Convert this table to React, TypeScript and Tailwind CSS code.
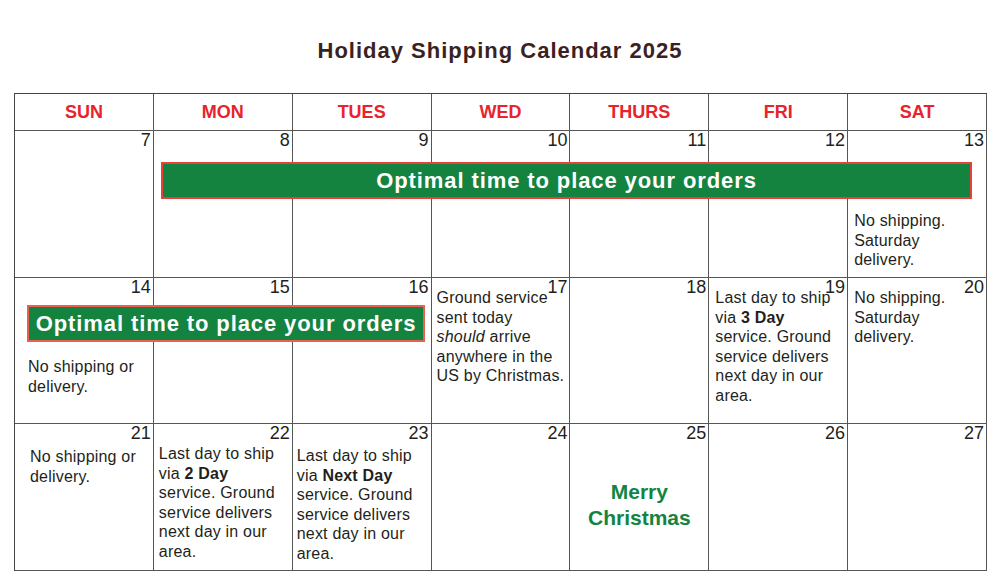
import React from "react";

function Num({ n }: { n: number }) {
  return (
    <div className="h-[18px] text-right pr-[2px] text-[18px] leading-[18px]">{n}</div>
  );
}

function Cell({
  n,
  h,
  children,
}: {
  n: number;
  h: string;
  children?: React.ReactNode;
}) {
  return (
    <div className={`border-r border-b border-[#555] flex flex-col ${h}`}>
      <Num n={n} />
      {children}
    </div>
  );
}

function Txt({ className, children }: { className: string; children: React.ReactNode }) {
  return (
    <div className={`text-[16px] leading-[19.5px] tracking-[0.2px] ${className}`}>{children}</div>
  );
}

export default function App() {
  const days = ["SUN", "MON", "TUES", "WED", "THURS", "FRI", "SAT"];
  return (
    <div className="w-[1000px] h-[582px] bg-white font-['Liberation_Sans',Arial,sans-serif] text-[#231f20] overflow-hidden">
      <div className="pt-[40px] text-center text-[22px] leading-[22px] font-bold tracking-[1px] text-[#3b2222]">
        Holiday Shipping Calendar 2025
      </div>
      <div className="relative ml-[14px] mt-[31px] w-[973px] grid grid-cols-7 border-l border-t border-[#444]">
        {days.map((d) => (
          <div
            key={d}
            className="h-[37px] border-r border-b border-[#555] flex items-center justify-center text-[18px] font-bold text-[#e8232c]"
          >
            {d}
          </div>
        ))}

        {/* Row 1 */}
        <Cell n={7} h="h-[147px]" />
        <Cell n={8} h="h-[147px]" />
        <Cell n={9} h="h-[147px]" />
        <Cell n={10} h="h-[147px]" />
        <Cell n={11} h="h-[147px]" />
        <Cell n={12} h="h-[147px]" />
        <Cell n={13} h="h-[147px]">
          <Txt className="mt-[62px] pl-[6px]">
            No shipping.
            <br />
            Saturday
            <br />
            delivery.
          </Txt>
        </Cell>

        {/* Row 2 */}
        <Cell n={14} h="h-[146px]">
          <Txt className="mt-[61px] pl-[13px]">
            No shipping or
            <br />
            delivery.
          </Txt>
        </Cell>
        <Cell n={15} h="h-[146px]" />
        <Cell n={16} h="h-[146px]" />
        <Cell n={17} h="h-[146px]">
          <Txt className="mt-[-8px] pl-[5px]">
            Ground service
            <br />
            sent today
            <br />
            <i>should</i> arrive
            <br />
            anywhere in the
            <br />
            US by Christmas.
          </Txt>
        </Cell>
        <Cell n={18} h="h-[146px]" />
        <Cell n={19} h="h-[146px]">
          <Txt className="mt-[-8px] pl-[6px]">
            Last day to ship
            <br />
            via <b>3 Day</b>
            <br />
            service. Ground
            <br />
            service delivers
            <br />
            next day in our
            <br />
            area.
          </Txt>
        </Cell>
        <Cell n={20} h="h-[146px]">
          <Txt className="mt-[-8px] pl-[6px]">
            No shipping.
            <br />
            Saturday
            <br />
            delivery.
          </Txt>
        </Cell>

        {/* Row 3 */}
        <Cell n={21} h="h-[147px]">
          <Txt className="mt-[5px] pl-[15px]">
            No shipping or
            <br />
            delivery.
          </Txt>
        </Cell>
        <Cell n={22} h="h-[147px]">
          <Txt className="mt-[2px] pl-[5px]">
            Last day to ship
            <br />
            via <b>2 Day</b>
            <br />
            service. Ground
            <br />
            service delivers
            <br />
            next day in our
            <br />
            area.
          </Txt>
        </Cell>
        <Cell n={23} h="h-[147px]">
          <Txt className="mt-[4px] pl-[4px]">
            Last day to ship
            <br />
            via <b>Next Day</b>
            <br />
            service. Ground
            <br />
            service delivers
            <br />
            next day in our
            <br />
            area.
          </Txt>
        </Cell>
        <Cell n={24} h="h-[147px]" />
        <Cell n={25} h="h-[147px]">
          <div className="mt-[37px] text-center text-[21px] leading-[26px] font-bold text-[#13843f]">
            Merry
            <br />
            Christmas
          </div>
        </Cell>
        <Cell n={26} h="h-[147px]" />
        <Cell n={27} h="h-[147px]" />

        {/* Banners */}
        <div className="absolute left-[146px] top-[68px] w-[811px] h-[37px] bg-[#13833f] border-2 border-[#e8403a] flex items-center justify-center text-white text-[22px] font-bold tracking-[0.9px]">
          Optimal time to place your orders
        </div>
        <div className="absolute left-[12px] top-[211px] w-[398px] h-[37px] bg-[#13833f] border-2 border-[#e8604f] flex items-center justify-center text-white text-[22px] font-bold tracking-[0.9px]">
          Optimal time to place your orders
        </div>
      </div>
    </div>
  );
}
